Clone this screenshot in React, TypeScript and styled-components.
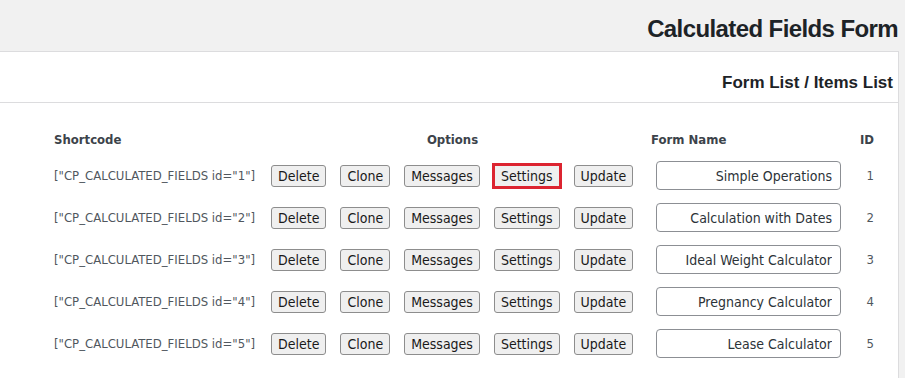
import React from "react";
import styled, { createGlobalStyle, css } from "styled-components";

const GlobalStyle = createGlobalStyle`
  html, body { margin: 0; padding: 0; }
  body {
    background: #f1f1f1;
    font-family: "DejaVu Sans Condensed", "DejaVu Sans", sans-serif;
    font-stretch: condensed;
    color: #3c434a;
  }
`;

const Page = styled.div`
  width: 905px;
  height: 378px;
  overflow: hidden;
  display: flex;
  flex-direction: column;
`;

const TitleBar = styled.div`
  height: 51px;
  display: flex;
  justify-content: flex-end;
  align-items: flex-end;
  padding-right: 7px;
  box-sizing: border-box;
`;

const Title = styled.h1`
  margin: 0 0 7px 0;
  font-family: "Liberation Sans", Arial, sans-serif;
  font-stretch: normal;
  font-weight: 700;
  font-size: 24px;
  letter-spacing: -0.6px;
  line-height: 30px;
  color: #1d2327;
`;

const Panel = styled.section`
  flex: 1;
  margin-right: 6px;
  background: #ffffff;
  border-top: 1px solid #dcdcde;
  border-right: 1px solid #dcdcde;
  display: flex;
  flex-direction: column;
`;

const PanelHeader = styled.div`
  height: 42px;
  border-bottom: 1px solid #dcdcde;
  display: flex;
  justify-content: flex-end;
  align-items: flex-end;
  padding: 0 5px 8px 0;
`;

const PanelTitle = styled.h3`
  margin: 0;
  font-family: "Liberation Sans", Arial, sans-serif;
  font-stretch: normal;
  font-weight: 700;
  font-size: 17px;
  line-height: 22px;
  color: #1d2327;
`;

const Table = styled.div`
  display: grid;
  grid-template-columns: 217px 363px 207px 33px;
  grid-template-rows: 17px;
  grid-auto-rows: 29px;
  row-gap: 13px;
  align-items: center;
  padding: 28px 0 0 54px;
`;

const HeadCell = styled.div<{ $align?: "left" | "center" | "right"; $pad?: number }>`
  font-weight: 700;
  font-size: 13px;
  line-height: 17px;
  color: #3c434a;
  text-align: ${(p) => p.$align ?? "left"};
  padding-left: ${(p) => p.$pad ?? 0}px;
  white-space: nowrap;
`;

const Shortcode = styled.div`
  font-size: 13px;
  line-height: 17px;
  color: #50575e;
  white-space: nowrap;
`;

const Options = styled.div`
  display: flex;
  align-items: center;
  gap: 14px;
`;

const Button = styled.button<{ $active?: boolean }>`
  height: 22px;
  padding: 0 6px;
  margin: 0;
  font-family: "DejaVu Sans Condensed", "DejaVu Sans", sans-serif;
  font-stretch: condensed;
  font-size: 14px;
  line-height: 20px;
  color: #1a1a1a;
  background: #efefef;
  border: 1px solid #8d8d8d;
  border-radius: 3px;
  cursor: pointer;
  ${(p) =>
    p.$active &&
    css`
      border-color: #dc2430;
      outline: 2px solid #dc2430;
      border-radius: 0;
    `}
`;

const NameCell = styled.div`
  padding-left: 22px;
  display: flex;
`;

const NameInput = styled.input`
  width: 185px;
  height: 29px;
  box-sizing: border-box;
  padding: 0 8px;
  font-family: "DejaVu Sans Condensed", "DejaVu Sans", sans-serif;
  font-stretch: condensed;
  font-size: 14px;
  color: #2c3338;
  text-align: right;
  background: #fff;
  border: 1px solid #8c8f94;
  border-radius: 4px;
`;

const IdCell = styled.div`
  font-size: 13px;
  color: #50575e;
  text-align: right;
`;

const forms = [
  { id: 1, name: "Simple Operations" },
  { id: 2, name: "Calculation with Dates" },
  { id: 3, name: "Ideal Weight Calculator" },
  { id: 4, name: "Pregnancy Calculator" },
  { id: 5, name: "Lease Calculator" },
];

export default function App() {
  return (
    <>
      <GlobalStyle />
      <Page>
        <TitleBar>
          <Title>Calculated Fields Form</Title>
        </TitleBar>
        <Panel>
          <PanelHeader>
            <PanelTitle>Form List / Items List</PanelTitle>
          </PanelHeader>
          <Table>
            <HeadCell>Shortcode</HeadCell>
            <HeadCell $align="center">Options</HeadCell>
            <HeadCell $pad={17}>Form Name</HeadCell>
            <HeadCell $align="right">ID</HeadCell>
            {forms.map((f) => (
              <React.Fragment key={f.id}>
                <Shortcode>["CP_CALCULATED_FIELDS id="{f.id}"]</Shortcode>
                <Options>
                  <Button>Delete</Button>
                  <Button>Clone</Button>
                  <Button>Messages</Button>
                  <Button $active={f.id === 1}>Settings</Button>
                  <Button>Update</Button>
                </Options>
                <NameCell>
                  <NameInput defaultValue={f.name} />
                </NameCell>
                <IdCell>{f.id}</IdCell>
              </React.Fragment>
            ))}
          </Table>
        </Panel>
      </Page>
    </>
  );
}
